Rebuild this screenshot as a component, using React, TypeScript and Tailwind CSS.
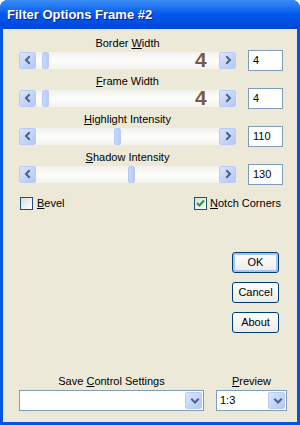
import React from 'react';

const font = { fontFamily: '"Liberation Sans", Arial, sans-serif' };

function Arrow({ dir }: { dir: 'left' | 'right' | 'down' }) {
  const d =
    dir === 'left' ? 'M6 3 L3 6 L6 9' : dir === 'right' ? 'M4 3 L7 6 L4 9' : 'M3 4.5 L6 7.5 L9 4.5';
  return (
    <svg width="10" height="12" viewBox="0 0 10 12" className={dir === 'down' ? 'w-[12px] h-[12px]' : ''}>
      <path d={d} fill="none" stroke="#4d6185" strokeWidth="2" strokeLinecap="square" />
    </svg>
  );
}

function BlueButton({ dir, className = '' }: { dir: 'left' | 'right' | 'down'; className?: string }) {
  return (
    <div
      className={`flex items-center justify-center rounded-[2px] border border-[#b8cbf4] bg-gradient-to-br from-[#dbe6fd] to-[#b2c7f5] ${className}`}
    >
      <Arrow dir={dir} />
    </div>
  );
}

function Scrollbar({ thumb, big }: { thumb: number; big?: string }) {
  return (
    <div className="relative flex h-[17px] w-[217px] items-center bg-gradient-to-b from-[#f3f1ea] via-[#fefefe] to-[#f4f2ec]">
      <BlueButton dir="left" className="h-[17px] w-[17px]" />
      <div className="relative h-[17px] flex-1">
        <div
          className="absolute top-0 h-[17px] w-[7px] rounded-[2px] border border-[#b8cbf4] bg-gradient-to-r from-[#c9d8fc] to-[#b6cbf8]"
          style={{ left: thumb }}
        />
      </div>
      <BlueButton dir="right" className="h-[17px] w-[17px]" />
      {big && (
        <span className="absolute left-[176px] top-[-5px] text-[21px] font-bold leading-[26px] text-[#7a5a44]">{big}</span>
      )}
    </div>
  );
}

function Group({ label, thumb, value, big }: { label: React.ReactNode; thumb: number; value: string; big?: string }) {
  return (
    <div className="flex flex-col">
      <div className="h-[12px] w-[217px] text-center text-[11px] leading-[12px] text-black">{label}</div>
      <div className="flex h-[22px] items-center">
        <Scrollbar thumb={thumb} big={big} />
        <div className="ml-[12px] flex h-[21px] w-[35px] items-center border border-[#7f9db9] bg-white pl-[4px] text-[11px]">
          {value}
        </div>
      </div>
    </div>
  );
}

function XpButton({ children, def }: { children: React.ReactNode; def?: boolean }) {
  return (
    <div
      className={`flex h-[21px] w-[47px] items-center justify-center rounded-[3px] border border-[#003c74] bg-gradient-to-b from-[#ffffff] to-[#ecebe6] text-[11px] ${
        def ? 'shadow-[inset_0_0_0_2px_#a9c3f0]' : ''
      }`}
    >
      {children}
    </div>
  );
}

function Checkbox({ checked }: { checked?: boolean }) {
  return (
    <div className="flex h-[13px] w-[13px] shrink-0 items-center justify-center border border-[#1c5180] bg-gradient-to-br from-[#dcdcd6] to-[#ffffff]">
      {checked && (
        <svg width="9" height="9" viewBox="0 0 9 9">
          <path d="M1 4 L3.5 6.5 L8 1.5" fill="none" stroke="#21a121" strokeWidth="2" />
        </svg>
      )}
    </div>
  );
}

export default function App() {
  return (
    <div className="flex h-[425px] w-[300px] flex-col overflow-hidden rounded-t-[8px] bg-[#0055e5]" style={font}>
      <div className="flex h-[29px] items-center bg-gradient-to-b from-[#3b8cf5] via-[#0058ee] to-[#0047d6] pl-[7px]">
        <span className="text-[13px] font-bold text-white [text-shadow:1px_1px_0_#0a1e8c]">Filter Options Frame #2</span>
      </div>
      <div className="mx-[3px] mb-[3px] flex flex-1 flex-col bg-[#ece9d8] pl-[16px] pt-[8px] text-black">
        <div className="flex flex-col gap-[4px]">
          <Group label={<>Border <u>W</u>idth</>} thumb={6} value="4" big="4" />
          <Group label={<><u>F</u>rame Width</>} thumb={6} value="4" big="4" />
          <Group label={<><u>H</u>ighlight Intensity</>} thumb={78} value="110" />
          <Group label={<><u>S</u>hadow Intensity</>} thumb={92} value="130" />
        </div>
        <div className="mt-[12px] flex h-[13px] items-center whitespace-nowrap text-[11px]">
          <div className="ml-[1px] flex w-[174px] items-center gap-[4px]">
            <Checkbox />
            <span><u>B</u>evel</span>
          </div>
          <div className="flex items-center gap-[3px]">
            <Checkbox checked />
            <span><u>N</u>otch Corners</span>
          </div>
        </div>
        <div className="ml-[213px] mt-[42px] flex flex-col gap-[9px]">
          <XpButton def>OK</XpButton>
          <XpButton>Cancel</XpButton>
          <XpButton>About</XpButton>
        </div>
        <div className="mt-[42px] flex items-end text-[11px]">
          <div className="flex flex-col items-center">
            <span className="mb-[3px] leading-[12px]">Save <u>C</u>ontrol Settings</span>
            <div className="flex h-[21px] w-[185px] items-center justify-end border border-[#7f9db9] bg-white pr-[1px]">
              <BlueButton dir="down" className="h-[17px] w-[17px]" />
            </div>
          </div>
          <div className="ml-[12px] flex flex-col items-center">
            <span className="mb-[3px] leading-[12px]"><u>P</u>review</span>
            <div className="flex h-[21px] w-[71px] items-center justify-between border border-[#7f9db9] bg-white pl-[3px] pr-[1px]">
              <span>1:3</span>
              <BlueButton dir="down" className="h-[17px] w-[17px]" />
            </div>
          </div>
        </div>
      </div>
    </div>
  );
}
